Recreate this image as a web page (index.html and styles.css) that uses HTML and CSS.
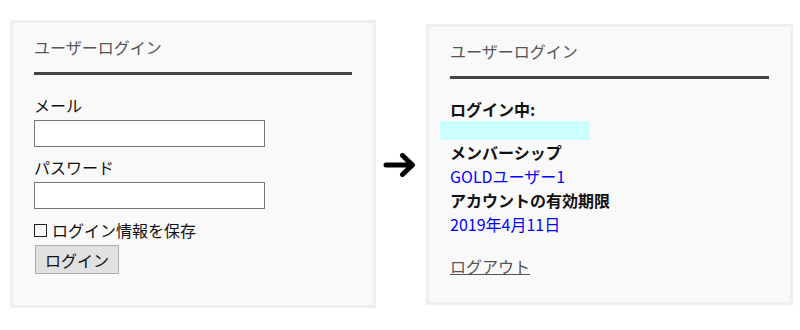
FILE: index.html
```html
<!DOCTYPE html>
<html lang="ja">
<head>
<meta charset="utf-8">
<link rel="stylesheet" href="styles.css">
</head>
<body>
<div class="stage">
  <section class="panel panel-login">
    <h2 class="panel-title">ユーザーログイン</h2>
    <form class="login-form">
      <label class="field-label">メール</label>
      <input class="field-input" type="text">
      <label class="field-label">パスワード</label>
      <input class="field-input" type="password">
      <div class="remember"><span class="box"></span>ログイン情報を保存</div>
      <button class="btn" type="button">ログイン</button>
    </form>
  </section>
  <div class="arrow">
    <svg width="33" height="24" viewBox="0 0 33 24"><path d="M3 12H29M19.5 2.5L29.5 12L19.5 21.5" fill="none" stroke="#000" stroke-width="5" stroke-linecap="round" stroke-linejoin="round"/></svg>
  </div>
  <section class="panel panel-status">
    <h2 class="panel-title">ユーザーログイン</h2>
    <div class="status">
      <div class="key">ログイン中:</div>
      <div class="masked"></div>
      <div class="key">メンバーシップ</div>
      <div class="val">GOLDユーザー1</div>
      <div class="key">アカウントの有効期限</div>
      <div class="val">2019年4月11日</div>
      <a class="logout" href="#">ログアウト</a>
    </div>
  </section>
</div>
</body>
</html>
```
FILE: styles.css
```css
* { box-sizing: border-box; }
body {
  margin: 0;
  background: #fff;
  font-family: "Noto Sans CJK JP", "Noto Sans", sans-serif;
  font-size: 16px;
  color: #111;
}
.stage {
  display: flex;
  align-items: center;
  padding: 20px 0 0 10px;
}
.panel {
  background: #f9f9f9;
  border: 3px solid #efefef;
  padding: 12px 21px 0 21px;
}
.panel-login { width: 366px; height: 288px; }
.panel-status { width: 367px; height: 281px; }
.panel-title {
  margin: 0;
  font-size: 16px;
  font-weight: normal;
  color: #555;
  line-height: 24px;
  padding: 0 0 13px;
  border-bottom: 3px solid #444;
}
.login-form {
  display: flex;
  flex-direction: column;
  align-items: flex-start;
  padding-top: 18px;
}
.field-label { line-height: 24px; margin-bottom: 3px; }
.field-input {
  width: 231px;
  height: 27px;
  border: 1px solid #767676;
  background: #fff;
  margin: 0 0 8px;
}
.remember {
  display: flex;
  align-items: center;
  line-height: 24px;
  margin-top: 1px;
}
.box {
  width: 13px;
  height: 13px;
  border: 1px solid #222;
  margin-right: 5px;
}
.btn {
  margin: 3px 0 0 1px;
  width: 84px;
  height: 29px;
  background: #e1e1e1;
  border: 1px solid #adadad;
  font: inherit;
  color: #111;
  padding: 0;
}
.status {
  display: flex;
  flex-direction: column;
  align-items: flex-start;
  padding-top: 18px;
}
.key { font-weight: bold; line-height: 24px; }
.val { color: #0000ff; line-height: 24px; }
.masked {
  width: 150px;
  height: 19px;
  background: #ccffff;
  margin: 0 0 0 -10px;
}
.logout {
  color: #555;
  margin-top: 18px;
  line-height: 24px;
}
.arrow {
  display: flex;
  margin: 0 10px 0 7px;
  padding-top: 2px;
}
.arrow svg { display: block; }
```
